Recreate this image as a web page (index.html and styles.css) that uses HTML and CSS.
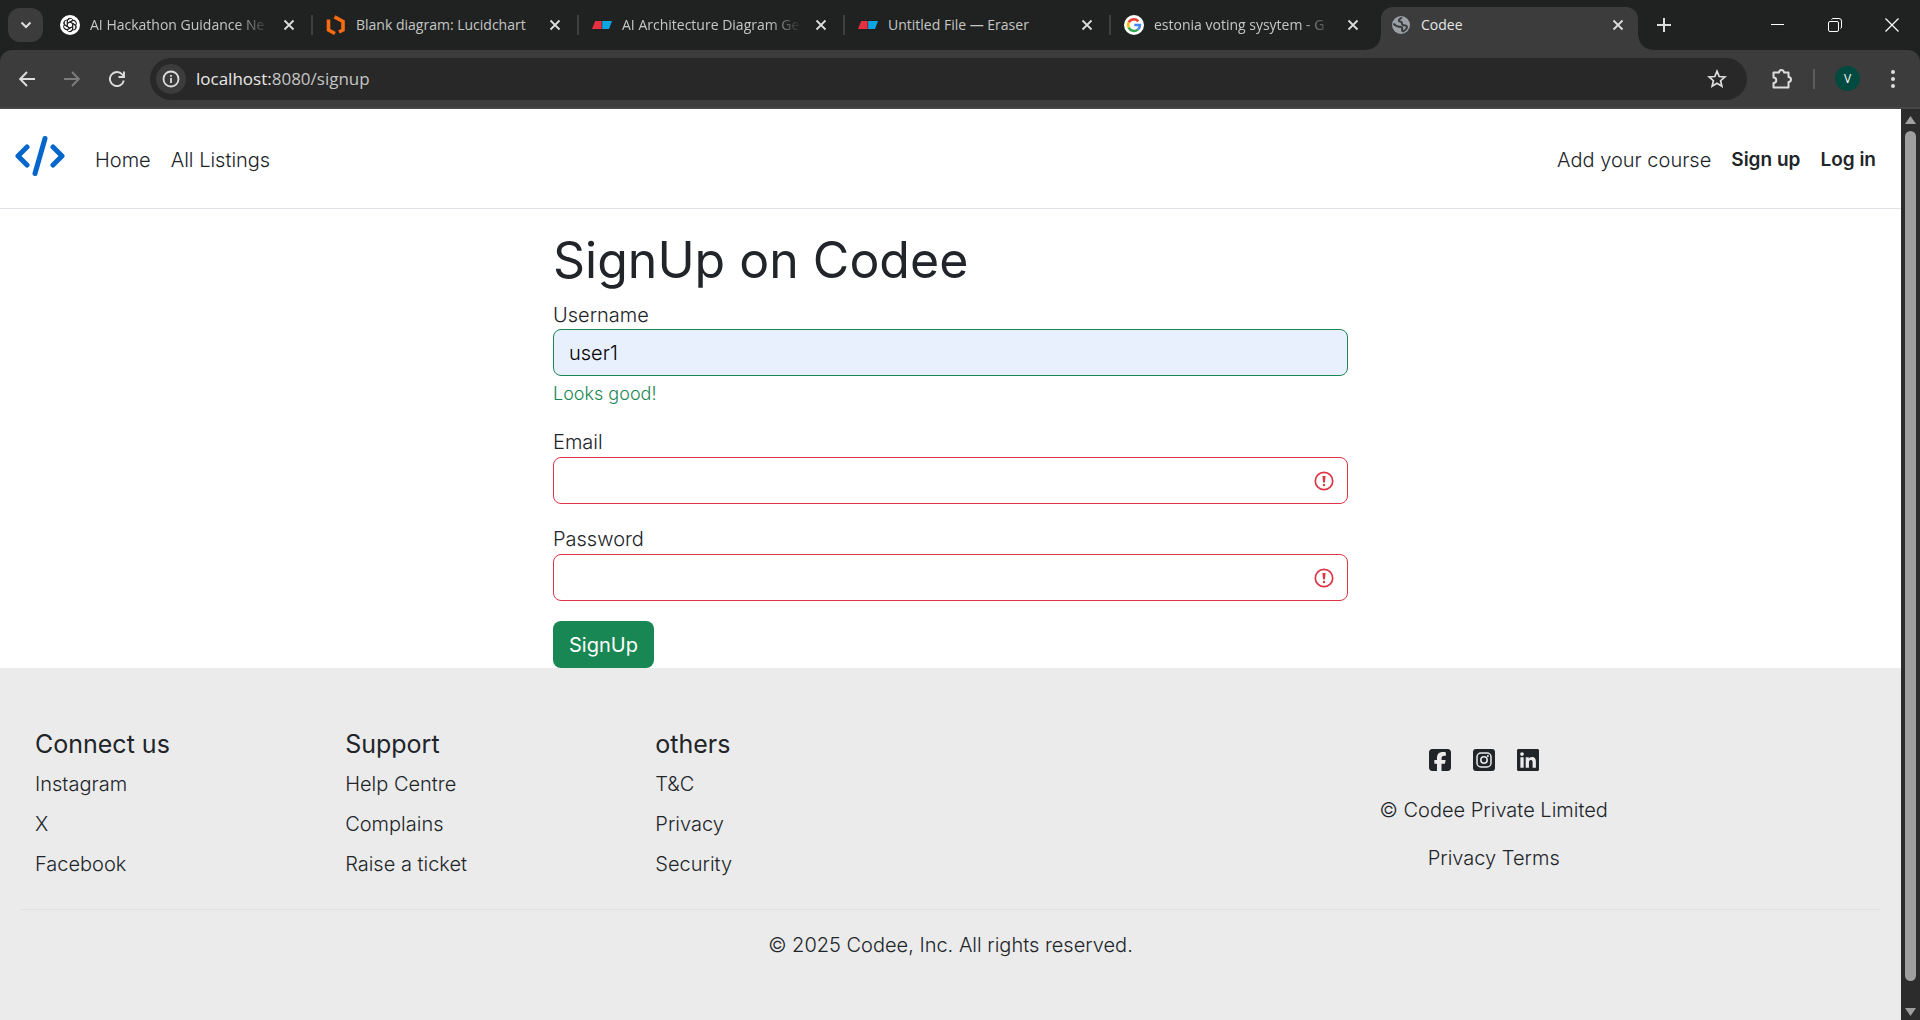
FILE: index.html
```html
<!DOCTYPE html>
<html lang="en">
<head>
<meta charset="utf-8">
<meta name="viewport" content="width=device-width, initial-scale=1">
<title>Codee</title>
<link rel="stylesheet" href="styles.css">
</head>
<body>
<svg class="defs" aria-hidden="true">
  <symbol id="close" viewBox="0 0 12 12"><path d="M1.500 1.500l9 9M10.500 1.500l-9 9" fill="none" stroke="currentColor" stroke-width="1.800"/></symbol>
  <symbol id="eraser" viewBox="0 0 20 20"><path d="M3.200 6H9.600V14H0z" fill="#e5303f"/><path d="M10.200 6H20L17 14H10.200z" fill="#0ea5e3"/></symbol>
  <symbol id="alert" viewBox="0 0 20 20"><circle cx="10" cy="10" r="8.700" fill="none" stroke="currentColor" stroke-width="1.700"/><path d="M8.400 5h3.200l-.7 6.500H9.100z" fill="currentColor"/><circle cx="10" cy="14" r="1.200" fill="currentColor"/></symbol>
</svg>
<header class="browser">
  <div class="tabstrip">
    <button class="tab-search" aria-label="Search tabs"><svg width="12" height="12" viewBox="0 0 12 12"><path d="M1.500 3.500L6 8l4.500-4.500" fill="none" stroke="currentColor" stroke-width="2"/></svg></button>
    <div class="tab">
      <svg class="favicon" viewBox="0 0 20 20"><circle cx="10" cy="10" r="10" fill="#fff"/><g fill="none" stroke="#222" stroke-width="1"><path id="petal" d="M7.300 11.500V6.200a3 3 0 0 1 5.600-1.400M7.300 8.500l4.500-2.600a3 3 0 0 1 4 1"/><use href="#petal" transform="rotate(60 10 10)"/><use href="#petal" transform="rotate(120 10 10)"/><use href="#petal" transform="rotate(180 10 10)"/><use href="#petal" transform="rotate(240 10 10)"/><use href="#petal" transform="rotate(300 10 10)"/></g></svg>
      <span class="tab-title fade">AI Hackathon Guidance Ne</span>
      <button class="tab-close" aria-label="Close tab"><svg><use href="#close"/></svg></button>
    </div>
    <div class="tab">
      <svg class="favicon" viewBox="0 0 20 20"><path d="M2.500 4.500V15L9 18.500M8.500 1.800L17 6.500V15l-4 2" fill="none" stroke="#f96b13" stroke-width="3.600"/></svg>
      <span class="tab-title">Blank diagram: Lucidchart</span>
      <button class="tab-close" aria-label="Close tab"><svg><use href="#close"/></svg></button>
    </div>
    <div class="tab">
      <svg class="favicon"><use href="#eraser"/></svg>
      <span class="tab-title fade">AI Architecture Diagram Ge</span>
      <button class="tab-close" aria-label="Close tab"><svg><use href="#close"/></svg></button>
    </div>
    <div class="tab">
      <svg class="favicon"><use href="#eraser"/></svg>
      <span class="tab-title">Untitled File — Eraser</span>
      <button class="tab-close" aria-label="Close tab"><svg><use href="#close"/></svg></button>
    </div>
    <div class="tab tab-last">
      <svg class="favicon" viewBox="0 0 20 20"><circle cx="10" cy="10" r="10" fill="#fff"/><g fill="none" stroke-width="2.600"><path d="M14.300 6.300A5.900 5.900 0 0 0 4.700 7.400" stroke="#ea4335"/><path d="M4.700 7.400a5.900 5.900 0 0 0 0 5.200" stroke="#fbbc04"/><path d="M4.700 12.600a5.900 5.900 0 0 0 9.300 1.800" stroke="#34a853"/><path d="M14 14.400A5.900 5.900 0 0 0 15.900 10H10.300" stroke="#4285f4"/></g></svg>
      <span class="tab-title fade">estonia voting sysytem - G</span>
      <button class="tab-close" aria-label="Close tab"><svg><use href="#close"/></svg></button>
    </div>
    <div class="tab active">
      <svg class="favicon" viewBox="0 0 20 20"><circle cx="10" cy="10" r="9" fill="#9aa0a6"/><path d="M11 2.500c-1.500 1-3.500 1.500-3 3.500l2.200 1c1.500.5 0 2.500 1.500 3s3 0 4 1.200-.5 3.500-3 4.800c-1.500.8-2-.5-1.500-2.500S8.500 12 7 11.500 3.500 10.500 2.500 8.500" fill="none" stroke="#3c3c3c" stroke-width="2"/></svg>
      <span class="tab-title">Codee</span>
      <button class="tab-close" aria-label="Close tab"><svg><use href="#close"/></svg></button>
    </div>
    <button class="new-tab" aria-label="New tab"><svg width="14" height="14" viewBox="0 0 14 14"><path d="M7 0v14M0 7h14" stroke="currentColor" stroke-width="2"/></svg></button>
    <div class="window-controls">
      <button aria-label="Minimize"><svg width="14" height="14" viewBox="0 0 14 14"><path d="M0 6.500h13" stroke="currentColor"/></svg></button>
      <button aria-label="Restore"><svg width="14" height="14" viewBox="0 0 14 14"><rect x=".5" y="3.500" width="10" height="10" rx="1.500" fill="none" stroke="currentColor"/><path d="M3.500 1.500Q4 .5 5 .5h6q2.500 0 2.500 2.500v6q0 1-1 1.500" fill="none" stroke="currentColor"/></svg></button>
      <button aria-label="Close"><svg width="14" height="14" viewBox="0 0 14 14"><path d="M.5.5l13 13M13.500.5l-13 13" stroke="currentColor" stroke-width="1.200"/></svg></button>
    </div>
  </div>
  <div class="toolbar">
    <div class="history">
      <button aria-label="Back"><svg width="16" height="16" viewBox="0 0 16 16"><path d="M16 8H1.500M8 1L1.200 8 8 15" fill="none" stroke="currentColor" stroke-width="1.900"/></svg></button>
      <button class="dim" aria-label="Forward"><svg width="16" height="16" viewBox="0 0 16 16"><path d="M0 8h14.500M8 1l6.800 7L8 15" fill="none" stroke="currentColor" stroke-width="1.900"/></svg></button>
      <button aria-label="Reload"><svg width="16" height="16" viewBox="0 0 16 16"><path d="M14.800 9.500A7 7 0 1 1 13.300 3.500L15 5.500M15 .5v5.500H9.500" fill="none" stroke="currentColor" stroke-width="1.900"/></svg></button>
    </div>
    <div class="omnibox">
      <button class="site-info" aria-label="View site information"><svg width="18" height="18" viewBox="0 0 18 18"><circle cx="9" cy="9" r="7.500" fill="none" stroke="currentColor" stroke-width="1.800"/><path d="M9 8v5M9 5v1.800" stroke="currentColor" stroke-width="1.800"/></svg></button>
      <span class="url">localhost:<span>8080/signup</span></span>
      <button class="bookmark" aria-label="Bookmark this tab"><svg width="20" height="20" viewBox="0 0 20 20"><path d="M10 2.200l2.200 5.300 5.700.5-4.300 3.700 1.300 5.600-4.900-3-4.900 3 1.300-5.600L2.100 8l5.700-.5z" fill="none" stroke="currentColor" stroke-width="1.700"/></svg></button>
    </div>
    <div class="tools">
      <button aria-label="Extensions"><svg width="22" height="22" viewBox="0 0 22 22"><path d="M2.500 4.500H8a2.500 2.500 0 0 1 5 0H17.500V9a2.500 2.500 0 0 1 0 5v5.500h-15V15a2.700 2.700 0 0 0 0-5.500z" fill="none" stroke="currentColor" stroke-width="2" stroke-linejoin="round"/></svg></button>
      <span class="divider"></span>
      <button class="avatar" aria-label="Profile">V</button>
      <button class="menu" aria-label="Menu"><svg width="6" height="20" viewBox="0 0 6 20"><g fill="currentColor"><circle cx="3" cy="3" r="2"/><circle cx="3" cy="10" r="2"/><circle cx="3" cy="17" r="2"/></g></svg></button>
    </div>
  </div>
</header>
<div class="viewport">
  <div class="site">
    <nav class="navbar">
      <a class="brand" href="#" aria-label="Codee"><svg width="50" height="42" viewBox="0 0 50 42"><path d="M12 12L3 21l9 9M38 12l9 9-9 9M30 3.500L20 38.500" fill="none" stroke="#0366ca" stroke-width="5" stroke-linecap="round" stroke-linejoin="round"/></svg></a>
      <a href="#">Home</a>
      <a href="#">All Listings</a>
      <div class="nav-right">
        <a href="#">Add your course</a>
        <a class="strong" href="#">Sign up</a>
        <a class="strong" href="#">Log in</a>
      </div>
    </nav>
    <main class="signup">
      <h1>SignUp on Codee</h1>
      <form novalidate>
        <div class="field">
          <label for="username">Username</label>
          <input class="valid" id="username" type="text" value="user1">
          <p class="feedback">Looks good!</p>
        </div>
        <div class="field">
          <label for="email">Email</label>
          <div class="control"><input class="invalid" id="email" type="email"><svg><use href="#alert"/></svg></div>
        </div>
        <div class="field">
          <label for="password">Password</label>
          <div class="control"><input class="invalid" id="password" type="password"><svg><use href="#alert"/></svg></div>
        </div>
        <button class="submit" type="button">SignUp</button>
      </form>
    </main>
    <footer class="footer">
      <div class="footer-columns">
        <section><h2>Connect us</h2><a href="#">Instagram</a><a href="#">X</a><a href="#">Facebook</a></section>
        <section><h2>Support</h2><a href="#">Help Centre</a><a href="#">Complains</a><a href="#">Raise a ticket</a></section>
        <section><h2>others</h2><a href="#">T&amp;C</a><a href="#">Privacy</a><a href="#">Security</a></section>
        <section class="company">
          <div class="social">
            <a href="#" aria-label="Facebook"><svg viewBox="0 32 448 448"><path fill="currentColor" d="M64 32C28.700 32 0 60.700 0 96V416c0 35.300 28.700 64 64 64h98.200V334.200H109.400V256h52.800V222.300c0-87.100 39.400-127.500 125-127.500c16.200 0 44.200 3.200 55.700 6.400V172c-6-.6-16.500-1-29.600-1c-42 0-58.200 15.900-58.200 57.200V256h83.600l-14.400 78.200H255V480H384c35.300 0 64-28.700 64-64V96c0-35.300-28.700-64-64-64H64z"/></svg></a>
            <a href="#" aria-label="Instagram"><svg viewBox="0 0 22 22"><rect width="22" height="22" rx="3" fill="currentColor"/><g fill="none" stroke="#ebebeb"><rect x="4" y="4" width="14" height="14" rx="4" stroke-width="1.500"/><circle cx="11" cy="11" r="3.200" stroke-width="1.500"/></g><circle cx="14.900" cy="7.100" r="1" fill="#ebebeb"/></svg></a>
            <a href="#" aria-label="LinkedIn"><svg viewBox="0 32 448 448"><path fill="currentColor" d="M416 32H31.900C14.300 32 0 46.500 0 64.300v383.400C0 465.500 14.300 480 31.900 480H416c17.600 0 32-14.500 32-32.300V64.300c0-17.800-14.400-32.300-32-32.300zM135.400 416H69V202.200h66.500V416zm-33.200-243c-21.300 0-38.500-17.300-38.500-38.500S80.900 96 102.200 96c21.200 0 38.500 17.300 38.500 38.500 0 21.300-17.200 38.500-38.500 38.500zm282.100 243h-66.400V312c0-24.800-.5-56.700-34.500-56.700-34.600 0-39.900 27-39.900 54.900V416h-66.400V202.200h63.700v29.200h.9c8.900-16.800 30.600-34.500 62.900-34.500 67.200 0 79.700 44.300 79.700 101.900V416z"/></svg></a>
          </div>
          <p>© Codee Private Limited</p>
          <p><a href="#">Privacy</a> <a href="#">Terms</a></p>
        </section>
      </div>
      <p class="copyright">© 2025 Codee, Inc. All rights reserved.</p>
    </footer>
  </div>
  <div class="scrollbar" aria-hidden="true">
    <svg width="13" height="10" viewBox="0 0 13 10"><path d="M6.500 1L12 9H1z"/></svg>
    <div class="thumb"></div>
    <svg width="13" height="10" viewBox="0 0 13 10"><path d="M6.500 9L12 1H1z"/></svg>
  </div>
</div>
</body>
</html>
```
FILE: styles.css
```css
* { box-sizing: border-box; }
body {
  margin: 0;
  min-height: 100vh;
  display: flex;
  flex-direction: column;
  background: #fff;
  color: #212529;
  font-family: Inter, "Liberation Sans", sans-serif;
  font-size: 20px;
  font-weight: 300;
  line-height: 30px;
}
h1, h2, p { margin: 0; }
a { color: inherit; text-decoration: none; }
button { padding: 0; border: 0; background: none; color: inherit; font: inherit; }
svg { display: block; flex: none; }
.defs { position: absolute; width: 0; height: 0; }

/* Browser frame */
.browser { background: #202221; color: #dcdddc; font-family: "Open Sans", "Noto Sans", sans-serif; font-weight: 400; }
.tabstrip { display: flex; height: 50px; padding-left: 8px; }
.tab-search {
  display: grid;
  place-items: center;
  width: 35px;
  height: 34px;
  margin: 8px 3px 0 0;
  border-radius: 12px;
  background: #3c3c3c;
}
.tab {
  position: relative;
  display: flex;
  flex: 0 1 266px;
  align-items: center;
  gap: 10px;
  min-width: 0;
  padding: 0 13px 0 14px;
  color: #c5c7c6;
}
.tab:not(.active, .tab-last)::after {
  content: "";
  position: absolute;
  top: 15px;
  right: -1px;
  width: 2px;
  height: 20px;
  background: #3e403f;
}
.favicon { width: 20px; height: 20px; }
.tab-title { flex: 1; overflow: hidden; white-space: nowrap; font-size: 14px; line-height: 20px; }
.fade { mask-image: linear-gradient(90deg, #000 82%, transparent); }
.tab-close { display: grid; place-items: center; width: 20px; height: 20px; color: #dcdddc; }
.tab-close svg { width: 12px; height: 12px; }
.active {
  margin: 7px 4px 0 5px;
  padding: 0 10px;
  flex-basis: 257px;
  border-radius: 12px 12px 0 0;
  background: #3c3c3c;
  color: #e6e6e6;
}
.active > * { margin-bottom: 7px; }
.active::before, .active::after { content: ""; position: absolute; bottom: 0; width: 14px; height: 14px; }
.active::before { right: 100%; background: radial-gradient(circle at 0 0, #202221 13px, #3c3c3c 14px); }
.active::after { left: 100%; background: radial-gradient(circle at 100% 0, #202221 13px, #3c3c3c 14px); }
.new-tab { display: grid; place-items: center; width: 44px; }
.window-controls { display: flex; margin-left: auto; }
.window-controls button { display: grid; place-items: center; width: 57px; color: #fff; }
.toolbar {
  display: flex;
  align-items: center;
  height: 59px;
  padding: 0 15px 0 4px;
  border-bottom: 2px solid #464646;
  border-radius: 12px 12px 0 0;
  background: #3c3c3c;
}
.history { display: flex; width: 146px; }
.history button { display: grid; place-items: center; width: 45px; height: 45px; }
.history .dim { color: #7c7c7c; }
.omnibox {
  display: flex;
  flex: 1;
  align-items: center;
  gap: 10px;
  height: 42px;
  padding: 0 20px 0 6px;
  border-radius: 21px;
  background: #282828;
}
.site-info { display: grid; place-items: center; width: 30px; height: 30px; border-radius: 50%; background: #3c3c3c; }
.url { flex: 1; font-size: 17px; line-height: 24px; color: #e8e8e8; }
.url span { color: #c5c5c5; }
.tools { display: flex; align-items: center; padding-left: 24px; gap: 20px; }
.divider { width: 2px; height: 20px; background: #5c5c5c; }
.avatar { width: 25px; height: 25px; border-radius: 50%; background: #004a3f; color: #fff; font-size: 12px; line-height: 25px; }
.menu { display: grid; place-items: center; width: 25px; }

/* Page */
.viewport { display: flex; flex: 1; }
.site { display: flex; flex: 1; flex-direction: column; min-width: 0; }
.navbar {
  display: flex;
  align-items: center;
  gap: 20px;
  height: 100px;
  padding: 0 25px 0 15px;
  border-bottom: 1px solid #dee2e6;
}
.navbar > a, .nav-right a { padding-top: 3px; }
.navbar .brand { margin-right: 10px; padding: 0 0 6px; }
.nav-right { display: flex; gap: 20px; margin-left: auto; }
.strong { font-size: 19px; font-weight: 600; }
.signup { width: 100%; max-width: 795px; margin: 0 auto; padding-top: 21px; }
h1 { margin-bottom: 10px; font-size: 50px; font-weight: 400; line-height: 60px; }
.field { margin-bottom: 20px; }
.field label { display: block; height: 29px; }
.field + .field label { height: 30px; }
.field input {
  display: block;
  width: 100%;
  height: 47px;
  padding: 0 15px;
  border: 1px solid #dc3545;
  border-radius: 8px;
  background: #fff;
  color: #000;
  font: inherit;
}
.field .valid { border-color: #198754; background: #e8f0fe; }
.feedback { padding-top: 5px; color: #198754; font-size: 18px; line-height: 26px; }
.control { position: relative; }
.control svg { position: absolute; top: 14px; right: 14px; width: 20px; height: 20px; color: #dc3545; }
.submit { display: block; height: 47px; padding: 0 16px; border-radius: 8px; background: #198754; color: #fff; font-weight: 400; }
.footer { flex: 1; padding: 61px 20px 50px; background: #ebebeb; }
.footer-columns { display: grid; grid-template-columns: 1fr 1fr 1fr 3fr; padding-bottom: 20px; border-bottom: 1px solid #dee2e6; }
.footer section { padding-left: 15px; }
.footer h2 { margin-bottom: 10px; font-size: 25px; font-weight: 400; line-height: 30px; }
.footer section > a { display: block; margin-bottom: 10px; }
.footer .company { padding: 14px 0 0 156px; text-align: center; }
.social { display: flex; justify-content: center; gap: 22px; margin: 6px 20px 24px 0; }
.social svg { width: 22px; height: 22px; }
.company p + p { margin-top: 18px; }
.copyright { padding-top: 20px; text-align: center; }
.scrollbar { display: flex; flex-direction: column; align-items: center; justify-content: space-between; width: 19px; padding: 6px 0 3px; background: #2c2c2c; fill: #9f9f9f; }
.thumb { flex: 1; width: 11px; margin: 6px 0 26px; border-radius: 6px; background: #9f9f9f; }
```
